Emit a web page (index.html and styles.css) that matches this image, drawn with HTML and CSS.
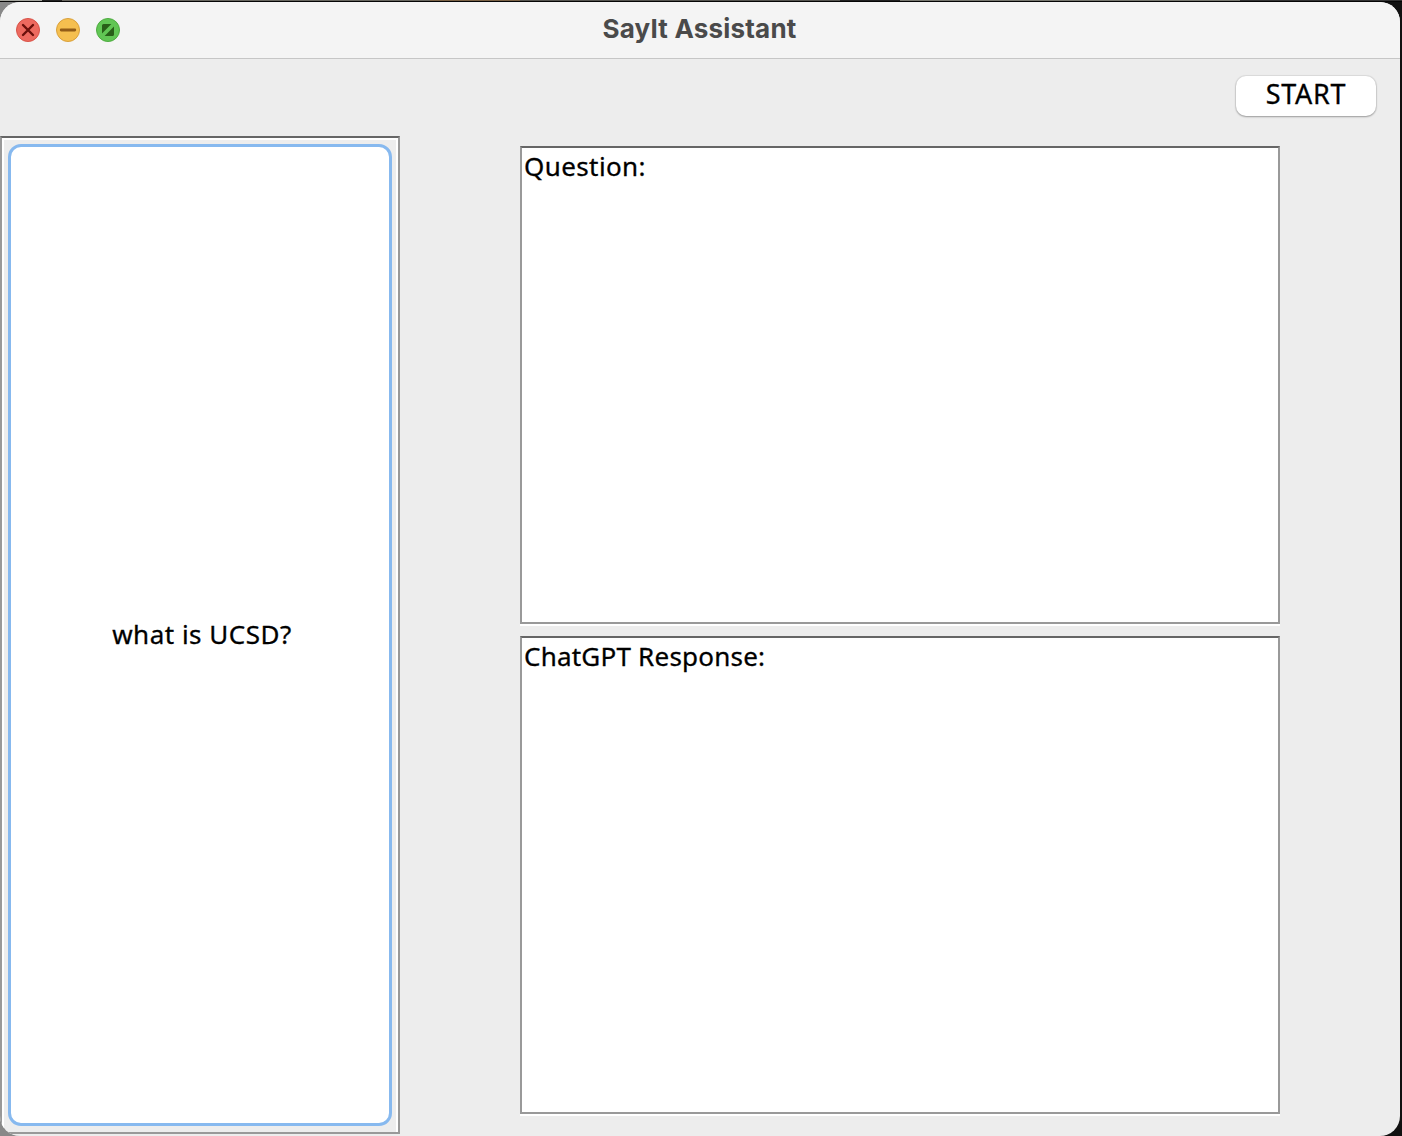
FILE: index.html
```html
<!DOCTYPE html>
<html lang="en">
<head>
<meta charset="utf-8">
<title>SayIt Assistant</title>
<link rel="stylesheet" href="styles.css">
</head>
<body>
<main class="window">
  <header class="titlebar">
    <div class="controls">
      <svg class="control" viewBox="0 0 24 24"><circle cx="12" cy="12" r="11.5" fill="#ed6a5f" stroke="#d85248"/><path d="M7 7l10 10M17 7L7 17" stroke="#6b110b" stroke-width="2.4" stroke-linecap="round"/></svg>
      <svg class="control" viewBox="0 0 24 24"><circle cx="12" cy="12" r="11.5" fill="#f5bf4f" stroke="#d9a03c"/><path d="M5.2 12h13.6" stroke="#925c17" stroke-width="2.8" stroke-linecap="round"/></svg>
      <svg class="control" viewBox="0 0 24 24"><circle cx="12" cy="12" r="11.5" fill="#61c654" stroke="#4eab40"/><path d="M6 15.4V7.6Q6 6 7.6 6h7.8zM18 8.6v7.8q0 1.6-1.6 1.6H8.6z" fill="#285f18"/></svg>
    </div>
    <h1 class="title">SayIt Assistant</h1>
  </header>
  <div class="toolbar"><button class="start"><span class="start-label">START</span></button></div>
  <div class="content">
    <aside class="history"><button class="history-item"><span class="history-label">what is UCSD?</span></button></aside>
    <section class="conversation">
      <div class="pane"><span class="question">Question:</span></div>
      <div class="pane"><span class="response">ChatGPT Response:</span></div>
    </section>
  </div>
</main>
</body>
</html>
```
FILE: styles.css
```css
* { box-sizing: border-box; }
body {
  margin: 0;
  height: 1136px;
  overflow: hidden;
  padding: 2px 2px 0 0;
  background:
    linear-gradient(#050505, #050505) 0 1px / 100% 1px no-repeat,
    linear-gradient(90deg, #a5a69f 0 42px, #222 42px 62px, #68665f 62px 430px, #7b6245 430px 520px, #55544f 520px 840px, #222 840px 900px, #77776f 900px 1240px, #333 1240px) 0 0 / 100% 1px no-repeat,
    linear-gradient(90deg, #888 0 700px, #111 700px);
  font-family: "Noto Sans", "Open Sans", sans-serif;
  font-size: 26px;
  color: #000;
  -webkit-text-stroke: 0.3px;
}
.window {
  display: flex;
  flex-direction: column;
  height: 1134px;
  border-radius: 20px;
  overflow: hidden;
  background: #ededed;
}
.titlebar {
  display: grid;
  grid-template-columns: 1fr auto 1fr;
  align-items: center;
  height: 57px;
  flex: none;
  padding-left: 16px;
  border-bottom: 1px solid #c6c6c6;
  background: #f4f4f4;
}
.controls { display: flex; gap: 16px; }
.control { width: 24px; height: 24px; fill: none; }
.title {
  margin: 0 17px 2px 0;
  font: 700 26px/32px Inter, sans-serif;
  letter-spacing: 0.2px;
  color: #4a4a4a;
  white-space: nowrap;
  -webkit-text-stroke: 0;
}
.toolbar {
  display: flex;
  justify-content: flex-end;
  height: 77px;
  flex: none;
  padding: 17px 24px 0 0;
}
button { border: 0; padding: 0; font: inherit; color: inherit; background: #fff; }
.start {
  width: 140px;
  height: 40px;
  border-radius: 10px;
  box-shadow: 0 0 1px 1px rgba(0,0,0,.07), 0 1px 2px rgba(0,0,0,.3);
  line-height: 36px;
  padding-bottom: 4px;
}
.start-label { font-size: 27px; letter-spacing: 0.7px; }
.content { display: flex; height: 998px; }
.history {
  display: flex;
  width: 400px;
  border: 2px solid #999;
  border-top-color: #666;
  padding: 6px;
  box-shadow: inset 2px 2px #fff, inset -2px 0 #fff;
}
.history-item {
  flex: 1;
  border: 3px solid #87b9ef;
  border-radius: 13px;
  padding: 0 0 2px 4px;
}
.history-label { letter-spacing: 0.5px; }
.conversation {
  display: flex;
  flex-direction: column;
  gap: 12px;
  width: 760px;
  margin: 10px 0 0 120px;
}
.pane {
  height: 478px;
  border: 2px solid #999;
  border-top-color: #666;
  box-shadow: 0 2px #fff;
  background: #fff;
  padding: 0 2px;
  line-height: 36px;
}
.question { letter-spacing: 0.4px; }
.response { letter-spacing: 0.22px; }
```
